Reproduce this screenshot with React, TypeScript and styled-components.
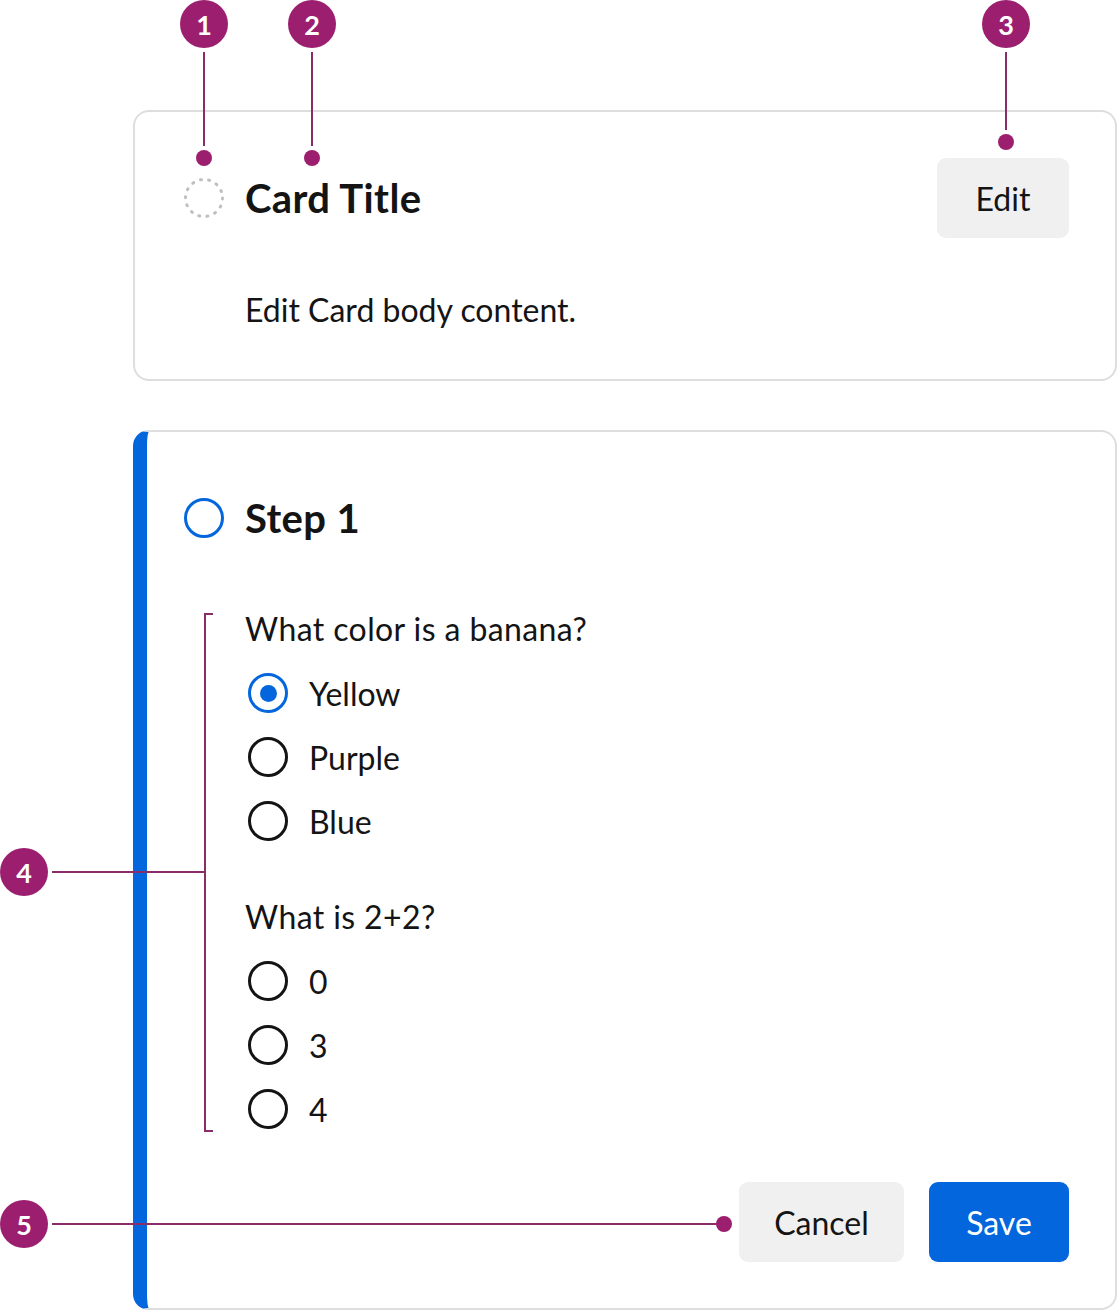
import React from "react";
import styled, { createGlobalStyle, css } from "styled-components";

const purple = "#9b1f6e";
const leader = "#8a2c68";
const blue = "#0466dc";
const ink = "#141414";

const GlobalStyle = createGlobalStyle`
  html, body {
    margin: 0;
    padding: 0;
    background: #fff;
  }
  body {
    font-family: "Lato", "Noto Sans", sans-serif;
    color: ${ink};
  }
  * { box-sizing: border-box; }
`;

const Page = styled.div`
  position: relative;
  width: 1118px;
  height: 1310px;
  overflow: hidden;
  padding: 110px 1px 0 133px;
  display: flex;
  flex-direction: column;
  gap: 49px;
`;

const Card = styled.section<{ $accent?: boolean }>`
  border: 2px solid #dedede;
  border-radius: 16px;
  padding: 46px 46px 49px 49px;
  background: #fff;

  ${(p) =>
    p.$accent &&
    css`
      border-left: 14px solid ${blue};
      padding: 46px 46px 46px 37px;
      height: 880px;
      flex: none;
    `}
`;

const Header = styled.header`
  display: flex;
  align-items: center;
  gap: 21px;
  min-height: 80px;
`;

const StatusIcon = styled.svg`
  width: 40px;
  height: 40px;
  flex: none;
  display: block;
`;

const Title = styled.h2`
  flex: 1;
  margin: 0;
  font-family: "Lato", sans-serif;
  font-weight: 700;
  font-size: 40px;
  line-height: 44px;
  letter-spacing: 0.4px;
`;

const Button = styled.button<{ $primary?: boolean; $w: number }>`
  width: ${(p) => p.$w}px;
  height: 80px;
  border: none;
  border-radius: 9px;
  font-family: "Lato", sans-serif;
  font-size: 32px;
  padding: 0;
  cursor: pointer;
  background: ${(p) => (p.$primary ? blue : "#f0f0f0")};
  color: ${(p) => (p.$primary ? "#fff" : ink)};
`;

const Body = styled.p`
  margin: 52px 0 0 61px;
  font-size: 32px;
  line-height: 40px;
`;

const Form = styled.div`
  margin: 51px 0 0 61px;
  display: flex;
  flex-direction: column;
  gap: 56px;
`;

const Group = styled.div`
  display: flex;
  flex-direction: column;
  gap: 24px;
`;

const Question = styled.div`
  font-size: 32px;
  line-height: 40px;
  letter-spacing: 0.4px;
`;

const Option = styled.label`
  display: flex;
  align-items: center;
  gap: 21px;
  padding-left: 3px;
  height: 40px;
  font-size: 32px;
`;

const Radio = styled.span<{ $checked?: boolean }>`
  width: 40px;
  height: 40px;
  border-radius: 50%;
  flex: none;
  display: grid;
  place-items: center;
  border: 3.5px solid ${(p) => (p.$checked ? blue : ink)};

  &::after {
    content: "";
    width: 17px;
    height: 17px;
    border-radius: 50%;
    background: ${blue};
    display: ${(p) => (p.$checked ? "block" : "none")};
  }
`;

const Actions = styled.div`
  margin-top: 53px;
  display: flex;
  justify-content: flex-end;
  gap: 25px;
`;

/* annotation overlay */

const Marker = styled.span<{ $x: number; $y: number }>`
  position: absolute;
  left: ${(p) => p.$x - 24}px;
  top: ${(p) => p.$y - 24}px;
  width: 48px;
  height: 48px;
  border-radius: 50%;
  background: ${purple};
  color: #fff;
  display: grid;
  place-items: center;
  font-family: "Lato", sans-serif;
  font-weight: 700;
  font-size: 27px;
  line-height: 1;
  z-index: 3;
`;

const Leader = styled.span<{ $x: number; $y: number; $len: number; $dir: "v" | "h" }>`
  position: absolute;
  background: ${leader};
  z-index: 2;
  ${(p) =>
    p.$dir === "v"
      ? css`
          left: ${p.$x - 1}px;
          top: ${p.$y}px;
          width: 2px;
          height: ${p.$len}px;
        `
      : css`
          left: ${p.$x}px;
          top: ${p.$y - 1}px;
          width: ${p.$len}px;
          height: 2px;
        `}
`;

const Dot = styled.span<{ $x: number; $y: number }>`
  position: absolute;
  left: ${(p) => p.$x - 8}px;
  top: ${(p) => p.$y - 8}px;
  width: 16px;
  height: 16px;
  border-radius: 50%;
  background: ${purple};
  z-index: 2;
`;

const Bracket = styled.span`
  position: absolute;
  left: 204px;
  top: 613px;
  width: 9px;
  height: 519px;
  border: 2px solid ${leader};
  border-right: none;
  z-index: 2;
`;

const questions = [
  { q: "What color is a banana?", options: ["Yellow", "Purple", "Blue"], checked: "Yellow" },
  { q: "What is 2+2?", options: ["0", "3", "4"], checked: "" },
];

const markers = [
  { n: 1, x: 204, y: 24 },
  { n: 2, x: 312, y: 24 },
  { n: 3, x: 1006, y: 24 },
  { n: 4, x: 24, y: 872 },
  { n: 5, x: 24, y: 1224 },
];

const App: React.FC = () => {
  return (
    <>
      <GlobalStyle />
      <Page>
        <Card>
          <Header>
            <StatusIcon viewBox="0 0 40 40">
              <circle
                cx="20"
                cy="20"
                r="18.5"
                fill="none"
                stroke="#bfbfbf"
                strokeWidth="3"
                strokeLinecap="round"
                strokeDasharray="1 7.3"
              />
            </StatusIcon>
            <Title>Card Title</Title>
            <Button $w={132}>Edit</Button>
          </Header>
          <Body>Edit Card body content.</Body>
        </Card>

        <Card $accent>
          <Header>
            <StatusIcon viewBox="0 0 40 40">
              <circle cx="20" cy="20" r="18.5" fill="none" stroke={blue} strokeWidth="3" />
            </StatusIcon>
            <Title>Step 1</Title>
          </Header>
          <Form>
            {questions.map((g) => (
              <Group key={g.q}>
                <Question>{g.q}</Question>
                {g.options.map((o) => (
                  <Option key={o}>
                    <Radio $checked={o === g.checked} />
                    {o}
                  </Option>
                ))}
              </Group>
            ))}
          </Form>
          <Actions>
            <Button $w={165}>Cancel</Button>
            <Button $w={140} $primary>
              Save
            </Button>
          </Actions>
        </Card>

        {markers.map((m) => (
          <Marker key={m.n} $x={m.x} $y={m.y}>
            {m.n}
          </Marker>
        ))}
        <Leader $dir="v" $x={204} $y={52} $len={94} />
        <Dot $x={204} $y={158} />
        <Leader $dir="v" $x={312} $y={52} $len={94} />
        <Dot $x={312} $y={158} />
        <Leader $dir="v" $x={1006} $y={52} $len={78} />
        <Dot $x={1006} $y={142} />
        <Leader $dir="h" $x={52} $y={872} $len={153} />
        <Bracket />
        <Leader $dir="h" $x={52} $y={1224} $len={668} />
        <Dot $x={724} $y={1224} />
      </Page>
    </>
  );
};

export default App;
